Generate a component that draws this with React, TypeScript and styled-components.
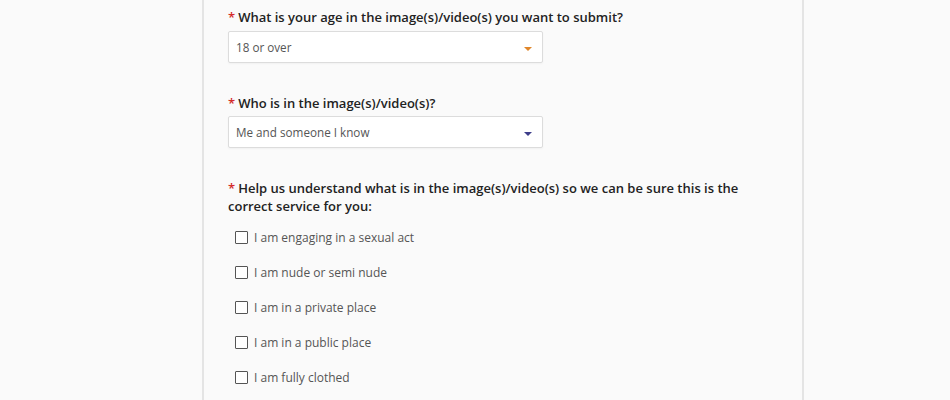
import React from "react";
import styled, { createGlobalStyle } from "styled-components";

const Global = createGlobalStyle`
  html, body { margin: 0; padding: 0; background: #fafafa; }
  body { font-family: "Open Sans", "Liberation Sans", Arial, sans-serif; }
`;

const Page = styled.div`
  height: 400px;
  overflow: hidden;
  padding-left: 202px;
`;

const Panel = styled.div`
  width: 602px;
  height: 400px;
  border-left: 2px solid #e4e4e4;
  border-right: 2px solid #e4e4e4;
  background: #fafafa;
  padding: 8px 24px 0 24px;
  box-sizing: border-box;
`;

const Field = styled.div`
  display: flex;
  flex-direction: column;
  margin-bottom: 31px;
`;

const Label = styled.div`
  font-size: 13px;
  font-weight: 600;
  line-height: 18px;
  color: #222;
  width: 520px;
`;

const Star = styled.span`
  color: #d42a2a;
  margin-right: 3px;
`;

const SelectBox = styled.div<{ $top: number }>`
  margin-top: ${(p) => p.$top}px;
  width: 315px;
  height: 32px;
  box-sizing: border-box;
  border: 1px solid #dcdcdc;
  border-radius: 2px;
  background: #fff;
  box-shadow: 0 1px 2px rgba(0, 0, 0, 0.04);
  display: flex;
  align-items: center;
  justify-content: space-between;
  padding: 0 10px 0 7px;
  font-size: 11.7px;
  color: #555;
`;

const Arrow = styled.span<{ $color: string }>`
  width: 0;
  height: 0;
  border-left: 4px solid transparent;
  border-right: 4px solid transparent;
  border-top: 4px solid ${(p) => p.$color};
  margin-top: 3px;
`;

const Options = styled.div`
  display: flex;
  flex-direction: column;
  margin-top: 15px;
  padding-left: 7px;
  gap: 21px;
`;

const Option = styled.label`
  display: flex;
  align-items: center;
  height: 14px;
  font-size: 12px;
  color: #555;
`;

const Box = styled.span`
  width: 11px;
  height: 11px;
  border: 1px solid #555;
  border-radius: 1px;
  background: #fff;
  margin-right: 6px;
  flex: none;
`;

const options = [
  "I am engaging in a sexual act",
  "I am nude or semi nude",
  "I am in a private place",
  "I am in a public place",
  "I am fully clothed",
];

export default function App() {
  return (
    <Page>
      <Global />
      <Panel>
        <Field>
          <Label>
            <Star>*</Star>What is your age in the image(s)/video(s) you want to submit?
          </Label>
          <SelectBox $top={5}>
            <span>18 or over</span>
            <Arrow $color="#e0862a" />
          </SelectBox>
        </Field>
        <Field>
          <Label>
            <Star>*</Star>Who is in the image(s)/video(s)?
          </Label>
          <SelectBox $top={4}>
            <span>Me and someone I know</span>
            <Arrow $color="#3d3d8a" />
          </SelectBox>
        </Field>
        <div>
          <Label>
            <Star>*</Star>Help us understand what is in the image(s)/video(s) so we can be sure this is the correct service for you:
          </Label>
          <Options>
            {options.map((o) => (
              <Option key={o}>
                <Box />
                {o}
              </Option>
            ))}
          </Options>
        </div>
      </Panel>
    </Page>
  );
}
